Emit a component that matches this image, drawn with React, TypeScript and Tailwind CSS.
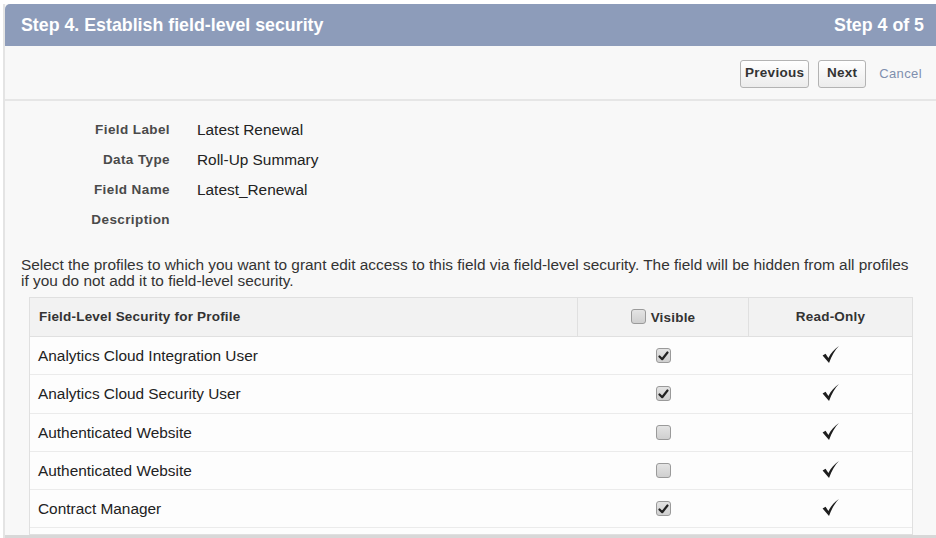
import React from 'react';

const rows = [
  { name: 'Analytics Cloud Integration User', visible: true },
  { name: 'Analytics Cloud Security User', visible: true },
  { name: 'Authenticated Website', visible: false },
  { name: 'Authenticated Website', visible: false },
  { name: 'Contract Manager', visible: true },
];

const fields = [
  { label: 'Field Label', value: 'Latest Renewal' },
  { label: 'Data Type', value: 'Roll-Up Summary' },
  { label: 'Field Name', value: 'Latest_Renewal' },
  { label: 'Description', value: '' },
];

function Box({ checked }: { checked: boolean }) {
  return (
    <div className="w-[15px] h-[15px] rounded-[3px] border border-[#9a9a9a] bg-gradient-to-b from-[#e4e4e4] to-[#cfcfcf] flex items-center justify-center">
      {checked && (
        <svg width="11" height="10" viewBox="0 0 11 10">
          <path d="M1.5 5.5 L4.2 8.2 L9.5 1.5" fill="none" stroke="#222" strokeWidth="2.2" strokeLinecap="round" strokeLinejoin="round" />
        </svg>
      )}
    </div>
  );
}

function Tick() {
  return (
    <svg width="19" height="19" viewBox="0 0 18 18">
      <path d="M1.5 10 L4.3 8.4 L7 12.2 C9.5 7.5 12.8 3.8 17 1 C13.2 5 10.2 9.8 7.6 17 Z" fill="#1e1e1e" />
    </svg>
  );
}

export default function App() {
  return (
    <div className="w-[936px] h-[538px] overflow-hidden bg-white pt-[4px] pl-[3px] font-['Liberation_Sans',Arial,sans-serif]">
      <div className="h-[534px] flex flex-col bg-[#f8f8f8] border-l-[2px] border-[#e4e4e4]">
        <div className="h-[42px] shrink-0 bg-[#8d9cba] rounded-tl-[5px] flex items-center justify-between pl-[16px] pr-[12px] pt-[1px] text-white font-bold text-[17.8px]">
          <span>Step 4. Establish field-level security</span>
          <span>Step 4 of 5</span>
        </div>

        <div className="h-[55px] shrink-0 flex items-center justify-end pr-[14px] pt-[2px] border-b-[2px] border-[#e6e6e6]">
          <button className="h-[28px] w-[69px] rounded-[3px] border border-[#b3b3b3] bg-gradient-to-b from-white to-[#ececec] text-[13.5px] font-bold text-[#333] tracking-[0.3px]">
            Previous
          </button>
          <button className="ml-[9px] h-[28px] w-[48px] rounded-[3px] border border-[#b3b3b3] bg-gradient-to-b from-white to-[#ececec] text-[13.5px] font-bold text-[#333] tracking-[0.3px]">
            Next
          </button>
          <span className="ml-[13px] text-[13px] tracking-[0.4px] text-[#7f8fae]">Cancel</span>
        </div>

        <div className="pt-[14px] flex flex-col">
          {fields.map((f) => (
            <div key={f.label} className="h-[30px] flex items-center">
              <div className="w-[165px] text-right text-[13.5px] font-bold text-[#4a4a4a] tracking-[0.4px]">{f.label}</div>
              <div className="ml-[27px] text-[15.4px] text-[#222]">{f.value}</div>
            </div>
          ))}
        </div>

        <p className="mt-[22px] pl-[16px] pr-[22px] text-[15.4px] leading-[16px] text-[#333]">
          Select the profiles to which you want to grant edit access to this field via field-level security. The field will be hidden from all profiles if you do not add it to field-level security.
        </p>

        <div className="mt-[8px] ml-[24px] w-[884px] border border-[#e0e0e0] bg-[#fdfdfd] flex-1">
          <div className="h-[39px] flex bg-[#f2f2f2] border-b border-[#e0e0e0] text-[13.5px] font-bold text-[#333] tracking-[0.2px]">
            <div className="w-[548px] flex items-center pl-[9px] border-r border-[#e0e0e0]">Field-Level Security for Profile</div>
            <div className="w-[171px] flex items-end justify-center pb-[8px] border-r border-[#e0e0e0] gap-[5px]">
              <div className="mb-[4px]">
                <Box checked={false} />
              </div>
              <span>Visible</span>
            </div>
            <div className="flex-1 flex items-center justify-center">Read-Only</div>
          </div>
          {rows.map((r, i) => (
            <div key={i} className="h-[38.3px] flex border-b border-[#ebebeb] text-[15.4px] text-[#222]">
              <div className="w-[548px] flex items-center pl-[8px]">{r.name}</div>
              <div className="w-[171px] flex items-center justify-center">
                <Box checked={r.visible} />
              </div>
              <div className="flex-1 flex items-center justify-center pb-[2px]">
                <Tick />
              </div>
            </div>
          ))}
        </div>
        <div className="h-[3px] bg-[#d8d8d8]" />
      </div>
    </div>
  );
}
